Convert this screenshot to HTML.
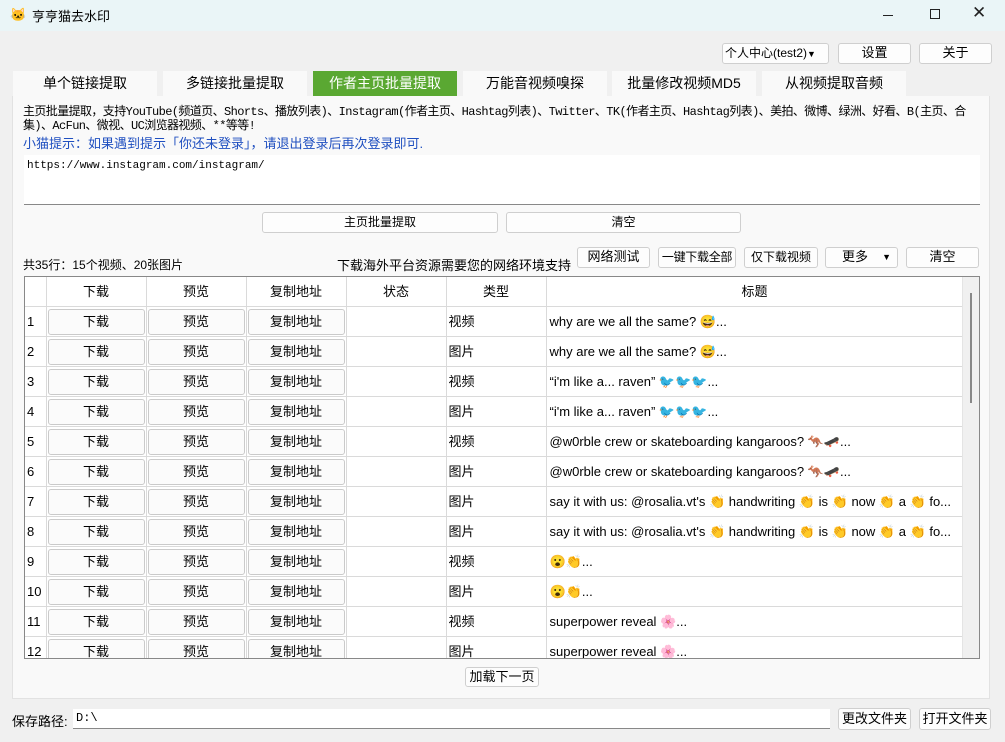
<!DOCTYPE html>
<html><head><meta charset="utf-8"><style>
*{box-sizing:border-box;margin:0;padding:0}
body{width:1005px;height:742px;background:#f0f0f0;font-family:"Liberation Sans","Noto Sans CJK SC",sans-serif;font-size:13px;color:#000;position:relative;overflow:hidden}
.a{position:absolute}
.title{left:0;top:0;width:1005px;height:31px;background:#eaf5f7}
.btn{position:absolute;background:#fdfdfd;border:1px solid #cfcfcf;border-radius:3px;text-align:center;font-size:12px;line-height:18px;white-space:nowrap;overflow:hidden}
.tab{position:absolute;top:71px;height:25px;width:144px;background:#f9f9f9;text-align:center;font-size:14px;line-height:25px}
.panel{left:12px;top:96px;width:978px;height:603px;background:#f9f9f9;border:1px solid #e2e2e2;border-top:none}
table{border-collapse:collapse;table-layout:fixed;font-size:13px}
td{border:1px solid #dadada;height:30px;padding:0;overflow:hidden;white-space:nowrap;line-height:28px;vertical-align:middle}
td.b{padding:1px 1px}
td.b div{height:26px;border:1px solid #cacaca;border-radius:3px;background:#fbfbfb;text-align:center;line-height:24px}
.mono{font-family:"Liberation Mono","Noto Sans CJK SC",monospace}
</style></head><body>
<div class="a title"></div>
<div class="a" style="left:10px;top:7px;font-size:13px">🐱</div>
<div class="a" style="left:32px;top:6px;font-size:13px">亨亨猫去水印</div>
<div class="a" style="left:883px;top:15px;width:10px;height:1px;background:#222"></div>
<div class="a" style="left:930px;top:9px;width:10px;height:10px;border:1px solid #222"></div>
<div class="a" style="left:972px;top:3px;font-size:17px;color:#222">✕</div>

<div class="btn" style="left:722px;top:43px;width:107px;height:21px;text-align:left;padding-left:2px;font-size:12px">个人中心(test2)<span style="font-size:9px">▼</span></div>
<div class="btn" style="left:838px;top:43px;width:73px;height:21px;font-size:13px">设置</div>
<div class="btn" style="left:919px;top:43px;width:73px;height:21px;font-size:13px">关于</div>

<div class="tab" style="left:13px">单个链接提取</div>
<div class="tab" style="left:163px">多链接批量提取</div>
<div class="tab" style="left:313px;background:#5aa832;color:#fff">作者主页批量提取</div>
<div class="tab" style="left:463px">万能音视频嗅探</div>
<div class="tab" style="left:612px">批量修改视频MD5</div>
<div class="tab" style="left:762px">从视频提取音频</div>

<div class="a panel"></div>
<div class="a mono" style="left:23px;top:105px;width:950px;font-size:12px;line-height:14px;letter-spacing:-0.6px">主页批量提取，支持YouTube(频道页、Shorts、播放列表)、Instagram(作者主页、Hashtag列表)、Twitter、TK(作者主页、Hashtag列表)、美拍、微博、绿洲、好看、B(主页、合集)、AcFun、微视、UC浏览器视频、**等等!</div>
<div class="a" style="left:23px;top:133px;font-size:13px;color:#1f4fc0">小猫提示：如果遇到提示「你还未登录」，请退出登录后再次登录即可.</div>
<div class="a mono" style="left:24px;top:155px;width:956px;height:50px;background:#fff;border-bottom:1px solid #888;font-size:11px;padding:5px 3px">https://www.instagram.com/instagram/</div>
<div class="btn" style="left:262px;top:212px;width:236px;height:21px">主页批量提取</div>
<div class="btn" style="left:506px;top:212px;width:235px;height:21px">清空</div>

<div class="a" style="left:23px;top:256px;font-size:12px">共35行：15个视频、20张图片</div>
<div class="a" style="left:337px;top:255px">下载海外平台资源需要您的网络环境支持</div>
<div class="btn" style="left:577px;top:247px;width:73px;height:21px;font-size:13px">网络测试</div>
<div class="btn" style="left:658px;top:247px;width:78px;height:21px;font-size:12px;letter-spacing:-0.3px">一键下载全部</div>
<div class="btn" style="left:744px;top:247px;width:74px;height:21px;font-size:12px">仅下载视频</div>
<div class="btn" style="left:825px;top:247px;width:73px;height:21px;text-align:left;padding-left:16px;font-size:13px">更多<span style="position:absolute;right:6px;font-size:9px">▼</span></div>
<div class="btn" style="left:906px;top:247px;width:73px;height:21px;font-size:13px">清空</div>

<div class="a" style="left:24px;top:276px;width:956px;height:383px;border:1px solid #888;background:#fff;overflow:hidden">
<table style="width:938px;margin-top:-1px;margin-left:-1px">
<colgroup><col style="width:22px"><col style="width:100px"><col style="width:100px"><col style="width:100px"><col style="width:100px"><col style="width:100px"><col style="width:417px"></colgroup>
<tr style="text-align:center"><td style="height:25px;line-height:23px;border-top:none;border-left:none"></td><td>下载</td><td>预览</td><td>复制地址</td><td>状态</td><td>类型</td><td>标题</td></tr>
<tr><td style="padding-left:3px;border-left:none">1</td><td class="b"><div>下载</div></td><td class="b"><div>预览</div></td><td class="b"><div>复制地址</div></td><td></td><td style="padding-left:2px">视频</td><td style="padding-left:3px">why are we all the same? 😅...</td></tr>
<tr><td style="padding-left:3px;border-left:none">2</td><td class="b"><div>下载</div></td><td class="b"><div>预览</div></td><td class="b"><div>复制地址</div></td><td></td><td style="padding-left:2px">图片</td><td style="padding-left:3px">why are we all the same? 😅...</td></tr>
<tr><td style="padding-left:3px;border-left:none">3</td><td class="b"><div>下载</div></td><td class="b"><div>预览</div></td><td class="b"><div>复制地址</div></td><td></td><td style="padding-left:2px">视频</td><td style="padding-left:3px">“i'm like a... raven” 🐦🐦🐦...</td></tr>
<tr><td style="padding-left:3px;border-left:none">4</td><td class="b"><div>下载</div></td><td class="b"><div>预览</div></td><td class="b"><div>复制地址</div></td><td></td><td style="padding-left:2px">图片</td><td style="padding-left:3px">“i'm like a... raven” 🐦🐦🐦...</td></tr>
<tr><td style="padding-left:3px;border-left:none">5</td><td class="b"><div>下载</div></td><td class="b"><div>预览</div></td><td class="b"><div>复制地址</div></td><td></td><td style="padding-left:2px">视频</td><td style="padding-left:3px">@w0rble crew or skateboarding kangaroos? 🦘🛹...</td></tr>
<tr><td style="padding-left:3px;border-left:none">6</td><td class="b"><div>下载</div></td><td class="b"><div>预览</div></td><td class="b"><div>复制地址</div></td><td></td><td style="padding-left:2px">图片</td><td style="padding-left:3px">@w0rble crew or skateboarding kangaroos? 🦘🛹...</td></tr>
<tr><td style="padding-left:3px;border-left:none">7</td><td class="b"><div>下载</div></td><td class="b"><div>预览</div></td><td class="b"><div>复制地址</div></td><td></td><td style="padding-left:2px">图片</td><td style="padding-left:3px">say it with us: @rosalia.vt's 👏 handwriting 👏 is 👏 now 👏 a 👏 fo...</td></tr>
<tr><td style="padding-left:3px;border-left:none">8</td><td class="b"><div>下载</div></td><td class="b"><div>预览</div></td><td class="b"><div>复制地址</div></td><td></td><td style="padding-left:2px">图片</td><td style="padding-left:3px">say it with us: @rosalia.vt's 👏 handwriting 👏 is 👏 now 👏 a 👏 fo...</td></tr>
<tr><td style="padding-left:3px;border-left:none">9</td><td class="b"><div>下载</div></td><td class="b"><div>预览</div></td><td class="b"><div>复制地址</div></td><td></td><td style="padding-left:2px">视频</td><td style="padding-left:3px">😮👏...</td></tr>
<tr><td style="padding-left:3px;border-left:none">10</td><td class="b"><div>下载</div></td><td class="b"><div>预览</div></td><td class="b"><div>复制地址</div></td><td></td><td style="padding-left:2px">图片</td><td style="padding-left:3px">😮👏...</td></tr>
<tr><td style="padding-left:3px;border-left:none">11</td><td class="b"><div>下载</div></td><td class="b"><div>预览</div></td><td class="b"><div>复制地址</div></td><td></td><td style="padding-left:2px">视频</td><td style="padding-left:3px">superpower reveal 🌸...</td></tr>
<tr><td style="padding-left:3px;border-left:none">12</td><td class="b"><div>下载</div></td><td class="b"><div>预览</div></td><td class="b"><div>复制地址</div></td><td></td><td style="padding-left:2px">图片</td><td style="padding-left:3px">superpower reveal 🌸...</td></tr>
</table>
<div class="a" style="left:937px;top:0;width:17px;height:383px;background:#f0f0f0;border-left:1px solid #e4e4e4"></div>
<div class="a" style="left:945px;top:16px;width:2px;height:110px;background:#888"></div>
</div>

<div class="btn" style="left:465px;top:667px;width:74px;height:20px;font-size:13px">加载下一页</div>

<div class="a" style="left:12px;top:711px">保存路径:</div>
<div class="a mono" style="left:73px;top:709px;width:757px;height:20px;background:#fff;border-bottom:1px solid #888;font-size:12px;padding:2px 3px">D:\</div>
<div class="btn" style="left:838px;top:708px;width:73px;height:22px;line-height:20px;font-size:13px">更改文件夹</div>
<div class="btn" style="left:919px;top:708px;width:72px;height:22px;line-height:20px;font-size:13px">打开文件夹</div>
</body></html>
